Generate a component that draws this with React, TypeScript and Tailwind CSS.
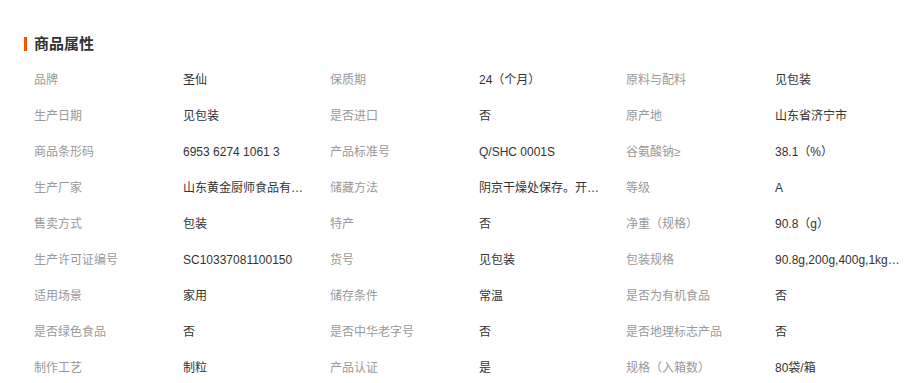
import React from "react";

const ROWS: [string, string][][] = [
  [["品牌", "圣仙"], ["保质期", "24（个月）"], ["原料与配料", "见包装"]],
  [["生产日期", "见包装"], ["是否进口", "否"], ["原产地", "山东省济宁市"]],
  [["商品条形码", "6953 6274 1061 3"], ["产品标准号", "Q/SHC 0001S"], ["谷氨酸钠≥", "38.1（%）"]],
  [["生产厂家", "山东黄金厨师食品有限公司"], ["储藏方法", "阴京干燥处保存。开封后请密封"], ["等级", "A"]],
  [["售卖方式", "包装"], ["特产", "否"], ["净重（规格）", "90.8（g）"]],
  [["生产许可证编号", "SC10337081100150"], ["货号", "见包装"], ["包装规格", "90.8g,200g,400g,1kg,2kg"]],
  [["适用场景", "家用"], ["储存条件", "常温"], ["是否为有机食品", "否"]],
  [["是否绿色食品", "否"], ["是否中华老字号", "否"], ["是否地理标志产品", "否"]],
  [["制作工艺", "制粒"], ["产品认证", "是"], ["规格（入箱数）", "80袋/箱"]],
];

export default function App() {
  return (
    <div className="w-[910px] h-[383px] bg-white overflow-hidden pl-[24px] pt-[36px] font-['Liberation_Sans','Noto_Sans_CJK_SC',sans-serif]">
      <div className="flex items-center gap-[7px] h-[16px]">
        <span className="w-[3px] h-[14px] bg-[#ff5000]" />
        <h2 className="text-[15px] leading-[16px] font-bold text-[#333]">商品属性</h2>
      </div>
      <div className="mt-[10px] pl-[10px]">
        {ROWS.map((row, i) => (
          <div key={i} className="flex h-[36px] items-center text-[12px]">
            {row.map(([k, v]) => (
              <div key={k} className="flex w-[296px] shrink-0">
                <span className="w-[149px] shrink-0 text-[#999]">{k}</span>
                <span className="w-[125px] truncate text-[#333]">{v}</span>
              </div>
            ))}
          </div>
        ))}
      </div>
    </div>
  );
}
